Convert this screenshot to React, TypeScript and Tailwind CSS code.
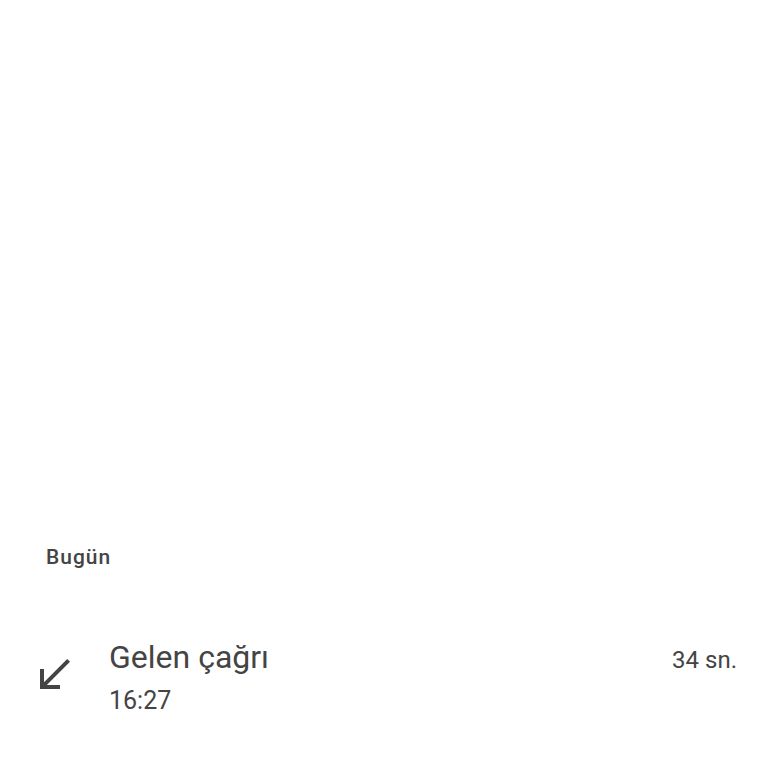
export default function App() {
  return (
    <div className="flex h-[768px] w-[768px] flex-col bg-white font-['Roboto',_'Noto_Sans',_sans-serif] text-[#444]">
      <div className="pl-[46px] pt-[545px]">
        <p className="text-[21px] leading-[24px] font-medium tracking-[1px]">Bugün</p>
      </div>

      <div className="mt-[68px] flex items-center pl-[30px] pr-[31px]">
        <div className="mb-1 flex h-12 w-12 shrink-0 items-center justify-center">
          <svg viewBox="0 0 24 24" className="h-12 w-12" fill="#444">
            <path d="M20 5.41 18.59 4 7 15.59V9H5v10h10v-2H8.41z" />
          </svg>
        </div>

        <div className="ml-[31px] flex flex-1 flex-col">
          <div className="flex items-baseline justify-between">
            <span className="text-[32px] leading-[40px]">Gelen çağrı</span>
            <span className="text-[24px] leading-[32px]">34 sn.</span>
          </div>
          <span className="mt-2 text-[25px] leading-[32px]">16:27</span>
        </div>
      </div>
    </div>
  );
}
